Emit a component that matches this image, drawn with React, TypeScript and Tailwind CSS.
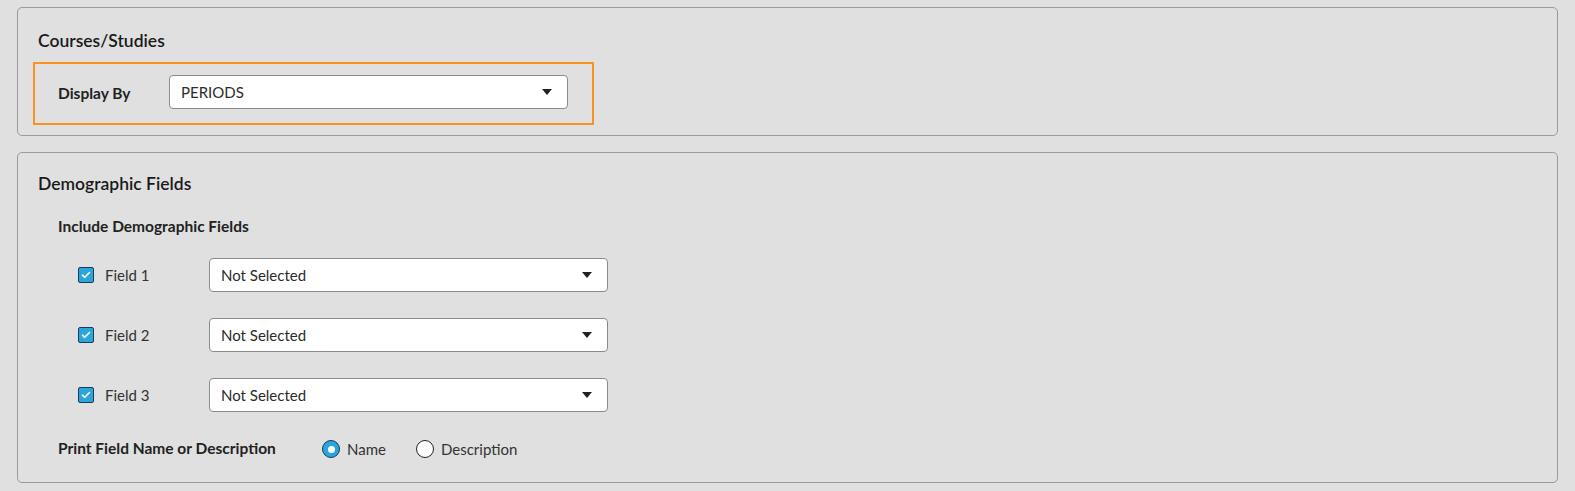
import React from "react";

const font = { fontFamily: "Lato, 'Noto Sans', sans-serif" };

function Arrow() {
  return (
    <svg width="10" height="6" viewBox="0 0 10 6" className="shrink-0">
      <path d="M0 0 L10 0 L5 6 Z" fill="#222" />
    </svg>
  );
}

function Select({ value }: { value: string }) {
  return (
    <div className="w-[399px] h-[34px] bg-white border border-[#8c8c8c] rounded-[4px] flex items-center justify-between pl-[11px] pr-[15px]">
      <span className="text-[15px] text-[#2b2b2b]">{value}</span>
      <Arrow />
    </div>
  );
}

function Check() {
  return (
    <div className="w-[16px] h-[16px] rounded-[2px] bg-[#2aa6dc] border border-[#1d3b52] flex items-center justify-center">
      <svg width="10" height="8" viewBox="0 0 10 8">
        <path d="M1.5 4.2 L3.8 6.3 L8.5 1.5" stroke="white" strokeWidth="1.6" fill="none" strokeLinecap="round" strokeLinejoin="round" />
      </svg>
    </div>
  );
}

function FieldRow({ label }: { label: string }) {
  return (
    <div className="flex items-center h-[34px]">
      <div className="w-[20px] ml-[20px]">
        <Check />
      </div>
      <span className="text-[15px] text-[#333] ml-[7px] w-[104px]">{label}</span>
      <Select value="Not Selected" />
    </div>
  );
}

export default function App() {
  return (
    <div style={font} className="w-full min-h-[491px] bg-[#e0e0e0] pt-[7px] px-[17px] pb-[9px] text-[#1f1f1f]">
      <div className="border border-[#9a9a9a] rounded-[5px] h-[129px] px-[15px] pt-[21px]">
        <h2 className="text-[17.5px] leading-[24px] font-semibold pl-[5px] text-[#1a1a1a]">Courses/Studies</h2>
        <div className="mt-[9px] w-[561px] h-[63px] border-[2px] border-[#f7941d] flex items-center pl-[23px] pb-[3px]">
          <span className="text-[15.5px] font-bold w-[111px] text-[#222] mt-[4px]">Display By</span>
          <Select value="PERIODS" />
        </div>
      </div>

      <div className="mt-[16px] border border-[#9a9a9a] rounded-[5px] px-[15px] pt-[19px] pb-[23px]">
        <h2 className="text-[17.5px] leading-[24px] font-semibold pl-[5px] text-[#1a1a1a]">Demographic Fields</h2>
        <div className="mt-[20px] pl-[25px] text-[15.5px] leading-[20px] font-bold text-[#222]">Include Demographic Fields</div>
        <div className="mt-[22px] pl-[25px] flex flex-col gap-[26px]">
          <FieldRow label="Field 1" />
          <FieldRow label="Field 2" />
          <FieldRow label="Field 3" />
        </div>
        <div className="mt-[27px] pl-[25px] flex items-center h-[20px]">
          <span className="text-[15.5px] font-bold w-[264px] text-[#222]">Print Field Name or Description</span>
          <div className="flex items-center">
            <span className="w-[18px] h-[18px] rounded-full bg-[#2aa6dc] border-[1.5px] border-[#1d3b52] flex items-center justify-center">
              <span className="w-[7px] h-[7px] rounded-full bg-white" />
            </span>
            <span className="ml-[7px] text-[15px] text-[#333]">Name</span>
          </div>
          <div className="flex items-center ml-[30px]">
            <span className="w-[18px] h-[18px] rounded-full bg-white border-[1.5px] border-[#222]" />
            <span className="ml-[7px] text-[15px] text-[#333]">Description</span>
          </div>
        </div>
      </div>
    </div>
  );
}
